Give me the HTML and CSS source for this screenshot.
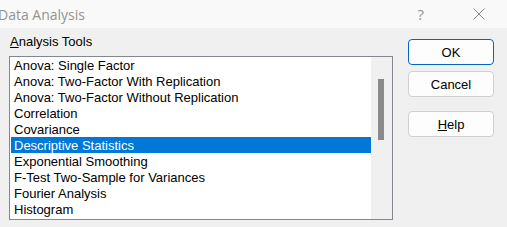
FILE: index.html
```html
<!DOCTYPE html>
<html lang="en">
<head>
  <meta charset="UTF-8">
  <title>Data Analysis</title>
  <link rel="stylesheet" href="styles.css">
</head>
<body>
  <div class="titlebar">
    <span class="title">Data Analysis</span>
    <span class="help-btn">?</span>
    <span class="close-btn">
      <svg width="12" height="12" viewBox="0 0 12 12"><path d="M0.5 0.5 L11.5 11.5 M11.5 0.5 L0.5 11.5" stroke="#8a8a8a" stroke-width="1" fill="none"/></svg>
    </span>
  </div>

  <div class="main">
    <div class="left">
      <label class="caption"><u>A</u>nalysis Tools</label>
      <div class="listbox">
        <ul class="items">
          <li>Anova: Single Factor</li>
          <li>Anova: Two-Factor With Replication</li>
          <li>Anova: Two-Factor Without Replication</li>
          <li>Correlation</li>
          <li>Covariance</li>
          <li class="selected">Descriptive Statistics</li>
          <li>Exponential Smoothing</li>
          <li>F-Test Two-Sample for Variances</li>
          <li>Fourier Analysis</li>
          <li>Histogram</li>
        </ul>
        <div class="scrollbar">
          <div class="thumb"></div>
        </div>
      </div>
    </div>

    <div class="buttons">
      <button class="btn default">OK</button>
      <button class="btn">Cancel</button>
      <button class="btn spaced"><u>H</u>elp</button>
    </div>
  </div>
</body>
</html>
```

FILE: styles.css
```css
body {
  margin: 0;
  background: #f0f0f0;
  font-family: "Liberation Sans", Arial, sans-serif;
  font-size: 13px;
  color: #000;
  overflow: hidden;
}
.titlebar {
  height: 28px;
  background: #f9f9f9;
  display: flex;
  align-items: center;
}
.title {
  font-family: "Open Sans", "Liberation Sans", sans-serif;
  font-size: 14px;
  color: #939393;
  margin-left: -2px;
  flex: 1;
}
.help-btn {
  font-family: "Open Sans", sans-serif;
  font-size: 15px;
  color: #939393;
  margin-right: 49px;
}
.close-btn {
  display: flex;
  margin-right: 22px;
}
.main {
  display: flex;
  padding: 6px 0 0 9px;
}
.caption {
  display: block;
  height: 16px;
  line-height: 16px;
  margin: 0 0 6px 1px;
}
.listbox {
  width: 382px;
  height: 162px;
  border: 1px solid #828790;
  background: #fff;
  display: flex;
}
.items {
  list-style: none;
  margin: 0;
  padding: 0 0 0 1px;
  flex: 1;
}
.items li {
  height: 16px;
  line-height: 17px;
  padding-left: 3px;
  white-space: nowrap;
}
.items li.selected {
  background: #0078d7;
  color: #fff;
}
.scrollbar {
  width: 21px;
  background: #f0f0f0;
  padding-top: 22px;
}
.thumb {
  width: 6px;
  height: 61px;
  margin-left: 7px;
  background: #8a8a8a;
}
.buttons {
  display: flex;
  flex-direction: column;
  gap: 6px;
  margin-left: 15px;
  padding-top: 5px;
}
.btn {
  width: 86px;
  height: 26px;
  background: #fdfdfd;
  border: 1px solid #d0d0d0;
  border-radius: 4px;
  font-family: "Liberation Sans", Arial, sans-serif;
  font-size: 13px;
  color: #000;
  padding: 0;
}
.btn.default {
  border-color: #0067c0;
}
.btn.spaced {
  margin-top: 8px;
}
```
